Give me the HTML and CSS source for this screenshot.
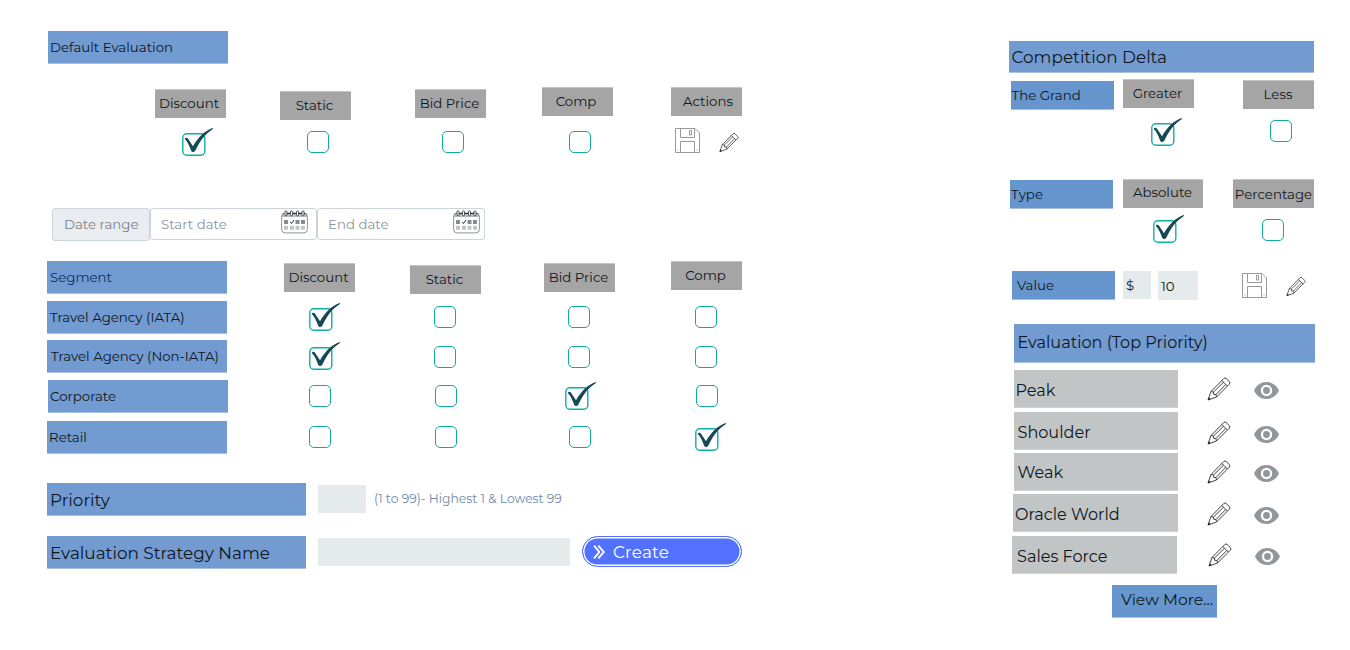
FILE: index.html
```
<!DOCTYPE html>
<html lang="en">
<head>
<meta charset="utf-8">
<title>Evaluation Strategy</title>
<link rel="stylesheet" href="styles.css">
</head>
<body>
<svg class="defs" aria-hidden="true">
  <symbol id="checked" viewBox="0 0 32 29">
    <rect x=".8" y="5.7" width="22" height="21.6" rx="4" fill="#fff" stroke="#12aea4" stroke-width="1.4"/>
    <path fill="#164857" d="M2.8 11C3.2 9.4 5.2 9.2 6.2 11L11 18.3C16 9.5 22 3 30.8 0C31.5.2 31.2.8 30.6 1.2C23 6 18 12.500 13.400 22.500C12.500 24.400 10 24.400 9.200 22.700C7.500 18.500 6 14 2.800 11Z"/>
  </symbol>
  <symbol id="save" viewBox="0 0 25 25">
    <g fill="none" stroke="#999" stroke-width="1"><path d="M.5.5H20L24.5 5V24.5H.5Z"/><path d="M5.5.5V9.5H19.5V.5M5.5 24.5V13.5H19.5V24.5"/><path d="M14.500 2.500H16.500V7H14.500Z"/><path d="M2.500 22H3.500M21.500 22H22.500"/></g>
  </symbol>
  <symbol id="pencil" viewBox="0 0 24 24">
    <g fill="none" stroke="#222" stroke-width=".85" stroke-linejoin="round"><path d="M1 23L4 14.500L16.800 1.500Q18 .3 19.200 1.500L22.500 4.800Q23.500 6 22.300 7.200L9.500 20Z"/><path d="M4 14.500L6.500 15L6.700 17.300L9 17.500L9.500 20M14.800 3.500L20.300 9M6.500 15L16.500 5.200M9 17.500L18.700 7.500"/></g><path fill="#222" d="M.8 23.300L1.800 20.300L3.600 22.200Z"/>
  </symbol>
  <symbol id="eye" viewBox="0 0 25 17">
    <path fill="#90979c" fill-rule="evenodd" d="M12.500 0C7 0 2.200 3.400 0 8.500C2.200 13.600 7 17 12.500 17S22.800 13.600 25 8.500C22.800 3.400 18 0 12.500 0ZM12.500 2.800A5.700 5.700 0 1 1 12.500 14.200A5.700 5.700 0 1 1 12.500 2.800Z"/><circle cx="12.500" cy="8.500" r="3.400" fill="#90979c"/>
  </symbol>
  <symbol id="calendar" viewBox="0 0 27 24">
    <path fill="#b4babd" d="M1 7V4Q1 3 3 3H24Q26 3 26 4V7Z"/>
    <rect x=".6" y="3" width="25.800" height="19.900" rx="3.500" fill="none" stroke="#777" stroke-width=".8"/>
    <path stroke="#333" stroke-width="1" d="M4 3.500H24"/>
    <g fill="#fff" stroke="#333" stroke-width=".8"><rect x="4" y=".8" width="2" height="5" rx="1"/><rect x="9.500" y=".8" width="2" height="5" rx="1"/><rect x="15.500" y=".8" width="2" height="5" rx="1"/><rect x="21" y=".8" width="2" height="5" rx="1"/></g>
    <path fill="#858b90" d="M3 10H7V14H3ZM14.500 10H18.500V14H14.500ZM20 10H24V14H20Z"/>
    <path fill="#c0c5c9" d="M3 15.800H7V19.800H3ZM9 15.800H13V19.800H9ZM14.500 15.800H18.500V19.800H14.500ZM20 15.800H24V19.800H20Z"/>
    <path fill="none" stroke="#333" d="M9.300 12L10.500 13.500L13 10"/>
  </symbol>
</svg>
<main class="page">
  <section class="editor">
    <h2 class="bar default-title">Default Evaluation</h2>
    <div class="row default-heads">
      <span class="chip">Discount</span><span class="chip low">Static</span><span class="chip">Bid Price</span><span class="chip high">Comp</span><span class="chip high actions-chip">Actions</span>
    </div>
    <div class="row default-boxes">
      <svg class="tick"><use href="#checked"/></svg><i class="box"></i><i class="box"></i><i class="box"></i>
      <span class="actions"><svg class="save"><use href="#save"/></svg><svg class="pencil"><use href="#pencil"/></svg></span>
    </div>
    <div class="dates">
      <span class="date-label">Date range</span>
      <span class="date-field">Start date<svg class="calendar"><use href="#calendar"/></svg></span>
      <span class="date-field end">End date<svg class="calendar"><use href="#calendar"/></svg></span>
    </div>
    <div class="segments">
      <div class="row seg heads"><h2 class="bar navy">Segment</h2><span class="chip">Discount</span><span class="chip low">Static</span><span class="chip">Bid Price</span><span class="chip high">Comp</span></div>
      <div class="row seg iata"><span class="bar">Travel Agency (IATA)</span><svg class="tick"><use href="#checked"/></svg><i class="box"></i><i class="box"></i><i class="box"></i></div>
      <div class="row seg non-iata"><span class="bar">Travel Agency (Non-IATA)</span><svg class="tick"><use href="#checked"/></svg><i class="box"></i><i class="box"></i><i class="box"></i></div>
      <div class="row seg corporate"><span class="bar">Corporate</span><i class="box"></i><i class="box"></i><svg class="tick"><use href="#checked"/></svg><i class="box"></i></div>
      <div class="row seg retail"><span class="bar">Retail</span><i class="box"></i><i class="box"></i><i class="box"></i><svg class="tick"><use href="#checked"/></svg></div>
    </div>
    <div class="form-row priority"><span class="bar large wide">Priority</span><span class="field short"></span><span class="hint">(1 to 99)- Highest 1 &amp; Lowest 99</span></div>
    <div class="form-row name"><span class="bar large wide">Evaluation Strategy Name</span><span class="field long"></span>
      <button class="create"><svg class="chevrons" viewBox="0 0 12 14"><path d="M1 .7L6.300 7L1 13.300M5.300 .7L10.800 7L5.300 13.300"/></svg>Create</button></div>
  </section>

  <aside class="side">
    <h2 class="bar large wide delta-title">Competition Delta</h2>
    <div class="opts grand"><span class="bar blue">The Grand</span><span class="chip greater">Greater</span><span class="chip less">Less</span></div>
    <div class="opts grand-boxes"><svg class="tick"><use href="#checked"/></svg><i class="box"></i></div>
    <div class="opts type"><span class="bar blue">Type</span><span class="chip absolute">Absolute</span><span class="chip percentage">Percentage</span></div>
    <div class="opts type-boxes"><svg class="tick"><use href="#checked"/></svg><i class="box"></i></div>
    <div class="opts value"><span class="bar blue">Value</span><span class="field currency">$</span><span class="field amount">10</span><svg class="save"><use href="#save"/></svg><svg class="pencil"><use href="#pencil"/></svg></div>
    <h2 class="bar large top-title">Evaluation (Top Priority)</h2>
    <div class="item peak"><span class="name-cell">Peak</span><svg class="pencil"><use href="#pencil"/></svg><svg class="eye"><use href="#eye"/></svg></div>
    <div class="item shoulder"><span class="name-cell">Shoulder</span><svg class="pencil"><use href="#pencil"/></svg><svg class="eye"><use href="#eye"/></svg></div>
    <div class="item weak"><span class="name-cell">Weak</span><svg class="pencil"><use href="#pencil"/></svg><svg class="eye"><use href="#eye"/></svg></div>
    <div class="item oracle"><span class="name-cell">Oracle World</span><svg class="pencil"><use href="#pencil"/></svg><svg class="eye"><use href="#eye"/></svg></div>
    <div class="item sales"><span class="name-cell">Sales Force</span><svg class="pencil"><use href="#pencil"/></svg><svg class="eye"><use href="#eye"/></svg></div>
    <a class="bar blue large more">View More...</a>
  </aside>
</main>
</body>
</html>
```
FILE: styles.css
```
* { box-sizing: border-box; }
body { margin: 0; background: #fff; color: #10161c; font: 400 13.33px/16px Montserrat, Inter, sans-serif; }
h2 { margin: 0; font: inherit; }
svg { display: block; flex: none; }
.defs { position: absolute; width: 0; height: 0; }
.page { display: flex; width: 1350px; height: 650px; overflow: hidden; }
.editor { width: 1008px; padding: 31px 0 0 47px; }
.side { width: 342px; padding-top: 41px; }

.bar { display: flex; align-items: center; flex: none; width: 180px; height: 33px; padding-left: 3px; background: #729bd1; white-space: nowrap; border: 0 solid #a9c1e2; border-bottom-width: 1px; }
.bar.blue { width: 103px; height: 29px; padding-left: 1px; background: #6796cf; }
.bar.large { width: 259px; font-size: 16.1px; padding-left: 4px; }
.bar.wide { font-size: 16.85px; padding: 1px 0 0 3px; }
.navy { color: #0b2f61; }
.chip { display: flex; align-items: center; justify-content: center; width: 71px; height: 29px; padding: 0 2px 2px 0; background: #a5a5a5; border-top: 1px solid #c4c4c4; white-space: nowrap; }
.chip.low { margin-top: 2px; }
.chip.high { margin-top: -2px; }
.chip.actions-chip { padding: 0 0 2px 3px; }
.box { display: block; flex: none; width: 22px; height: 22px; border: 1.5px solid #10aaa1; border-radius: 5px; }
.tick { width: 32px; height: 29px; }
.save { width: 25px; height: 25px; }
.pencil { width: 20px; height: 21px; }
.eye { width: 25px; height: 17px; }

.row { display: grid; align-items: start; }
.default-title { margin-left: 1px; padding-left: 2px; }
.default-heads { margin: 25px 0 0 107.500px; grid-template-columns: 125.500px 135px 126.500px 129.500px 71px; height: 39px; }
.default-boxes { margin-left: 135px; grid-template-columns: 125px 135px 126.500px 106.500px 70px; height: 80px; }
.default-boxes .box { margin-top: 3px; }
.actions { display: flex; gap: 19px; }
.actions .pencil { margin-top: 4px; }

.dates { display: flex; margin-left: 5px; height: 53px; color: #8d9499; }
.date-label, .date-field { display: flex; align-items: center; height: 32px; padding-bottom: 1px; border: 1.500px solid #ced5da; border-radius: 3px; }
.date-label { width: 98px; height: 33px; padding: 0 0 2px 11px; background: #e9ecf0; color: #7d8388; }
.date-field { width: 167px; padding-left: 10px; }
.date-field.end { width: 168px; }
.calendar { width: 27px; height: 24px; margin: -3px 8px 0 auto; }
.end .calendar { margin-right: 4px; }

.seg { grid-template-columns: 237px 126px 134px 127px 71px; }
.seg .box, .seg .tick { margin-left: 25px; }
.heads { height: 40px; }
.heads .chip { margin-top: 2px; }
.heads .chip.low { margin-top: 4px; }
.heads .chip.high { margin-top: 0; }
.iata { height: 39px; }
.iata .tick { margin-top: 2px; }
.iata .box { margin-top: 5px; margin-left: 24px; }
.non-iata { height: 40px; }
.non-iata .bar { padding-left: 4px; }
.non-iata .tick { margin-top: 2px; margin-left: 24.500px; }
.non-iata .box { margin: 6px 0 0 24px; }
.corporate { height: 41px; }
.corporate .bar { margin-left: 1px; padding-left: 2px; }
.corporate .box { margin-top: 5px; }
.corporate .tick { margin: 2px 0 0 21px; }
.retail { height: 62px; }
.retail .bar { padding-left: 2px; }
.retail .box { margin-top: 5px; }
.retail .tick { margin: 2px 0 0 24px; }

.form-row { display: flex; }
.priority { height: 53px; }
.field { display: flex; align-items: center; flex: none; height: 28px; background: #e5eaed; margin: 2px 0 0 12px; }
.short { width: 48px; }
.long { width: 252px; }
.hint { margin: 8px 0 0 8px; color: #7189a8; font-size: 12.350px; white-space: nowrap; }
.create { display: flex; align-items: center; width: 160px; height: 31px; margin-left: 12px; padding: 0 0 0 9px; border: 1.500px solid #5271ff; border-radius: 16px; background: #5271ff; box-shadow: inset 0 0 0 1.500px #fff; color: #fff; font: inherit; font-size: 16.800px; letter-spacing: .2px; gap: 7px; }
.chevrons { width: 14px; height: 14px; fill: none; stroke: #fff; stroke-width: 1.900; }

.bar.delta-title { width: 305.500px; height: 32px; margin-left: .5px; }
.opts { display: flex; align-items: flex-start; }
.grand { height: 45px; padding: 8px 0 0 2.500px; }
.greater { margin: -2px 0 0 9.500px; }
.chip.less { margin: -1px 0 0 49px; padding-right: 1px; }
.grand-boxes { height: 62px; padding-left: 142.500px; }
.grand-boxes .box { margin: 2px 0 0 87px; }
.type { height: 35px; padding-left: 2px; }
.chip.absolute { width: 80px; margin: -1px 0 0 10px; padding: 0 1px 4px 0; }
.chip.percentage { width: 81px; margin: -1px 0 0 30px; padding: 0; }
.type-boxes { height: 56px; padding-left: 145px; }
.type-boxes .box { margin: 4px 0 0 77px; }
.value { height: 53px; padding-left: 4px; }
.value .bar { padding-left: 5px; }
.value .field { margin-top: 0; padding-left: 3px; }
.field.currency { width: 28px; margin-left: 8px; }
.field.amount { width: 40px; height: 29px; margin-left: 7px; padding-top: 1px; }
.value .save { margin: 2px 0 0 44px; }
.value .pencil { margin: 5px 0 0 19px; }
.bar.top-title { width: 301.500px; height: 39px; margin: 0 0 7px 5.500px; padding-bottom: 3px; }
.item { display: flex; align-items: flex-start; padding-left: 5.500px; }
.name-cell { display: flex; align-items: center; width: 164.500px; height: 38px; padding: 2px 0 0 2px; background: #c1c5c6; border-bottom: 1px solid #d1d4d5; font-size: 16.100px; }
.item .pencil { width: 24px; height: 24px; margin: 7px 0 0 29px; }
.item .eye { margin: 12px 0 0 23px; }
.peak, .oracle { height: 42px; }
.shoulder, .weak { height: 41px; }
.shoulder .name-cell, .weak .name-cell { padding-left: 4px; }
.weak .name-cell { padding-top: 0; }
.shoulder .pencil { margin-top: 9px; }
.shoulder .eye { margin-top: 14px; }
.item.oracle { padding-left: 5px; }
.oracle .name-cell { padding-left: 2px; }
.oracle .pencil { margin: 8px 0 0 29.500px; }
.oracle .eye { margin-top: 13px; }
.item.sales { height: 49px; padding-left: 4px; }
.sales .name-cell { padding-left: 5px; }
.sales .pencil { margin-left: 31.500px; }
.bar.more { width: 105px; height: 33px; margin-left: 104px; padding: 0 0 2px 9px; font-size: 15.650px; }
```
